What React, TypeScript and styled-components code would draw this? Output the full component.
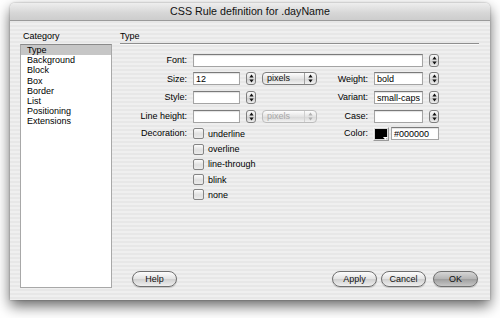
import React from "react";
import styled, { createGlobalStyle } from "styled-components";

const GlobalStyle = createGlobalStyle`
  html, body {
    margin: 0;
    padding: 0;
    background: #ffffff;
    font-family: "Liberation Sans", Arial, sans-serif;
    color: #000;
  }
`;

const Page = styled.div`
  width: 500px;
  height: 318px;
  padding: 3px 0 0 10px;
  box-sizing: border-box;
`;

const Window = styled.div`
  width: 480px;
  height: 297px;
  border-radius: 5px 5px 0 0;
  overflow: hidden;
  display: flex;
  flex-direction: column;
  box-shadow: 0 6px 14px rgba(0, 0, 0, 0.6), 0 0 2px rgba(0, 0, 0, 0.35);
  background: repeating-linear-gradient(
    to bottom,
    #efefef 0px,
    #efefef 2px,
    #e7e7e7 2px,
    #e7e7e7 4px
  );
`;

const TitleBar = styled.div`
  height: 17px;
  line-height: 17px;
  flex: none;
  text-align: center;
  font-size: 10.7px;
  color: #111;
  background: linear-gradient(to bottom, #eeeeee, #d6d6d6 60%, #cdcdcd);
  border-bottom: 1px solid #9a9a9a;
`;

const Body = styled.div`
  flex: 1;
  display: flex;
  padding: 0 11px 0 10px;
  gap: 8px;
  min-height: 0;
`;

const Sidebar = styled.div`
  width: 92px;
  display: flex;
  flex-direction: column;
  padding-bottom: 12px;
`;

const SectionLabel = styled.div<{ $indent?: number }>`
  height: 23px;
  line-height: 30px;
  font-size: 9px;
  padding-left: ${(p) => p.$indent ?? 0}px;
  box-sizing: border-box;
`;

const List = styled.div`
  flex: 1;
  background: #fff;
  border: 1px solid #a8a8a8;
  border-top-color: #8a8a8a;
`;

const ListItem = styled.div<{ $selected?: boolean }>`
  height: 10.2px;
  line-height: 10.2px;
  font-size: 9px;
  padding-left: 6px;
  background: ${(p) => (p.$selected ? "#c6c6c6" : "transparent")};
`;

const Panel = styled.div`
  flex: 1;
  display: flex;
  flex-direction: column;
  padding-bottom: 13px;
`;

const PanelHeader = styled.div`
  height: 23px;
  line-height: 30px;
  font-size: 9px;
  border-bottom: 1px solid #8e8e8e;
  box-shadow: 0 1px 0 #fafafa;
  box-sizing: border-box;
`;

const Form = styled.div`
  display: grid;
  grid-template-columns: 67px 47px 10px 55px 45px 49px 10px;
  grid-template-rows: repeat(4, 18.6px) auto;
  column-gap: 6px;
  align-items: center;
  margin-top: 7px;
  font-size: 9px;
`;

const Label = styled.div<{ $col: number; $top?: boolean }>`
  grid-column: ${(p) => p.$col};
  text-align: right;
  white-space: nowrap;
  align-self: ${(p) => (p.$top ? "start" : "center")};
  line-height: ${(p) => (p.$top ? "15px" : "normal")};
  margin-top: ${(p) => (p.$top ? "1px" : "0")};
`;

const TextField = styled.div<{ $col: string }>`
  grid-column: ${(p) => p.$col};
  height: 13px;
  line-height: 12px;
  box-sizing: border-box;
  background: #fff;
  border: 1px solid #a4a4a4;
  border-top-color: #7a7a7a;
  box-shadow: inset 0 1px 1px rgba(0, 0, 0, 0.12);
  padding: 0 2px;
  font-size: 9px;
  white-space: nowrap;
  overflow: hidden;
`;

const StepperBox = styled.div<{ $col: number }>`
  grid-column: ${(p) => p.$col};
  width: 10px;
  height: 13px;
  box-sizing: border-box;
  border: 1px solid #7f7f7f;
  border-radius: 3px;
  background: linear-gradient(to bottom, #fbfbfb, #dcdcdc 50%, #c9c9c9 51%, #ededed);
  display: flex;
  align-items: center;
  justify-content: center;
`;

const SelectBox = styled.div<{ $disabled?: boolean }>`
  grid-column: 4;
  height: 13px;
  box-sizing: border-box;
  border: 1px solid ${(p) => (p.$disabled ? "#bcbcbc" : "#7f7f7f")};
  border-radius: 4px;
  background: linear-gradient(to bottom, #fdfdfd, #e4e4e4 50%, #d6d6d6 51%, #f2f2f2);
  display: flex;
  align-items: center;
  font-size: 9px;
  color: ${(p) => (p.$disabled ? "#a8a8a8" : "#111")};
`;

const SelectText = styled.span`
  flex: 1;
  padding-left: 4px;
  line-height: 11px;
`;

const SelectArrows = styled.span<{ $disabled?: boolean }>`
  width: 11px;
  height: 100%;
  border-left: 1px solid ${(p) => (p.$disabled ? "#d0d0d0" : "#a0a0a0")};
  display: flex;
  align-items: center;
  justify-content: center;
`;

const Checks = styled.div`
  grid-column: 2 / 5;
  align-self: start;
  display: flex;
  flex-direction: column;
  margin-top: 1px;
`;

const CheckRow = styled.div`
  height: 15.2px;
  display: flex;
  align-items: center;
  gap: 4px;
`;

const CheckBox = styled.span`
  width: 11px;
  height: 11px;
  box-sizing: border-box;
  border: 1px solid #858585;
  border-radius: 2px;
  background: linear-gradient(to bottom, #fcfcfc, #e0e0e0 55%, #ececec);
`;

const ColorCell = styled.div`
  grid-column: 6 / 8;
  align-self: start;
  margin-top: 1px;
  height: 15px;
  display: flex;
  align-items: center;
  gap: 2px;
  margin-left: -1px;
`;

const Swatch = styled.div`
  position: relative;
  width: 16px;
  height: 14px;
  box-sizing: border-box;
  border: 1px solid #9a9a9a;
  border-top-color: #f4f4f4;
  border-left-color: #f4f4f4;
  padding: 1px;
  background: #d8d8d8;
`;

const SwatchFill = styled.div`
  width: 100%;
  height: 100%;
  background: #000;
`;

const SwatchCaret = styled.svg`
  position: absolute;
  right: 0px;
  bottom: 0px;
`;

const ColorField = styled(TextField)`
  flex: 1;
  padding: 0 2px;
`;

const ButtonRow = styled.div`
  margin-top: auto;
  display: flex;
  align-items: center;
  padding-left: 12px;
  padding-right: 1px;
`;

const Button = styled.div<{ $default?: boolean; $gap?: number }>`
  width: 45px;
  height: 16px;
  line-height: 14px;
  box-sizing: border-box;
  margin-left: ${(p) => p.$gap ?? 0}px;
  border: 1px solid #6f6f6f;
  border-radius: 8px;
  text-align: center;
  font-size: 9px;
  color: #111;
  background: ${(p) =>
    p.$default
      ? "linear-gradient(to bottom, #d6d6d6, #b4b4b4 50%, #9e9e9e 51%, #c6c6c6)"
      : "linear-gradient(to bottom, #fdfdfd, #e2e2e2 50%, #cfcfcf 51%, #efefef)"};
  box-shadow: 0 1px 1px rgba(0, 0, 0, 0.18);
`;

const Spacer = styled.div`
  flex: 1;
`;

const Arrows = ({ color = "#111" }: { color?: string }) => (
  <svg width="5" height="9" viewBox="0 0 5 9">
    <path d="M2.5 0.5 L4.6 3.4 L0.4 3.4 Z" fill={color} />
    <path d="M2.5 8.5 L4.6 5.6 L0.4 5.6 Z" fill={color} />
  </svg>
);

const Stepper = ({ col }: { col: number }) => (
  <StepperBox $col={col}>
    <Arrows />
  </StepperBox>
);

const categories = [
  "Type",
  "Background",
  "Block",
  "Box",
  "Border",
  "List",
  "Positioning",
  "Extensions",
];

const decorations = ["underline", "overline", "line-through", "blink", "none"];

export default function App() {
  return (
    <>
      <GlobalStyle />
      <Page>
        <Window>
          <TitleBar>CSS Rule definition for .dayName</TitleBar>
          <Body>
            <Sidebar>
              <SectionLabel $indent={3}>Category</SectionLabel>
              <List>
                {categories.map((c, i) => (
                  <ListItem key={c} $selected={i === 0}>
                    {c}
                  </ListItem>
                ))}
              </List>
            </Sidebar>
            <Panel>
              <PanelHeader>Type</PanelHeader>
              <Form>
                <Label $col={1}>Font:</Label>
                <TextField $col="2 / 7" />
                <Stepper col={7} />

                <Label $col={1}>Size:</Label>
                <TextField $col="2">12</TextField>
                <Stepper col={3} />
                <SelectBox>
                  <SelectText>pixels</SelectText>
                  <SelectArrows>
                    <Arrows />
                  </SelectArrows>
                </SelectBox>
                <Label $col={5}>Weight:</Label>
                <TextField $col="6">bold</TextField>
                <Stepper col={7} />

                <Label $col={1}>Style:</Label>
                <TextField $col="2" />
                <Stepper col={3} />
                <Label $col={5}>Variant:</Label>
                <TextField $col="6">small-caps</TextField>
                <Stepper col={7} />

                <Label $col={1}>Line height:</Label>
                <TextField $col="2" />
                <Stepper col={3} />
                <SelectBox $disabled>
                  <SelectText>pixels</SelectText>
                  <SelectArrows $disabled>
                    <Arrows color="#b0b0b0" />
                  </SelectArrows>
                </SelectBox>
                <Label $col={5}>Case:</Label>
                <TextField $col="6" />
                <Stepper col={7} />

                <Label $col={1} $top>
                  Decoration:
                </Label>
                <Checks>
                  {decorations.map((d) => (
                    <CheckRow key={d}>
                      <CheckBox />
                      <span>{d}</span>
                    </CheckRow>
                  ))}
                </Checks>
                <Label $col={5} $top>
                  Color:
                </Label>
                <ColorCell>
                  <Swatch>
                    <SwatchFill />
                    <SwatchCaret width="5" height="3" viewBox="0 0 5 3">
                      <path d="M0 0 L5 0 L2.5 3 Z" fill="#fff" />
                    </SwatchCaret>
                  </Swatch>
                  <ColorField $col="auto">#000000</ColorField>
                </ColorCell>
              </Form>
              <ButtonRow>
                <Button>Help</Button>
                <Spacer />
                <Button>Apply</Button>
                <Button $gap={4}>Cancel</Button>
                <Button $gap={7} $default>
                  OK
                </Button>
              </ButtonRow>
            </Panel>
          </Body>
        </Window>
      </Page>
    </>
  );
}
